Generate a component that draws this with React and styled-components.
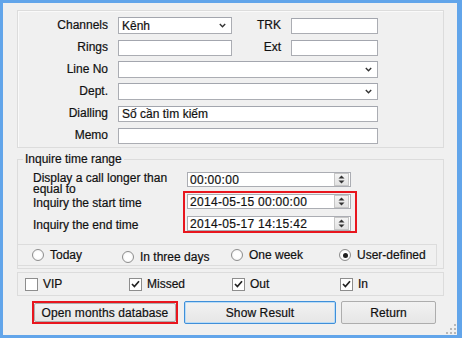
import React from 'react'
import styled, { createGlobalStyle } from 'styled-components'

const GlobalStyle = createGlobalStyle`
  html, body {
    margin: 0;
    padding: 0;
    background: #fff;
  }
  body {
    font-family: "Liberation Sans", Arial, sans-serif;
    font-size: 12px;
    color: #111;
    -webkit-text-stroke: 0.2px #111;
  }
  * {
    box-sizing: border-box;
  }
`

const Window = styled.div`
  position: relative;
  width: 462px;
  height: 338px;
  border-style: solid;
  border-color: #62a5ea;
  border-width: 3px 5px 3px 3px;
  background: #f0f0f0;
  padding: 7px 0 0 14px;
  display: flex;
  flex-direction: column;
`

const Group = styled.div`
  width: 427px;
  border: 1px solid #dcdcdc;
  box-shadow: inset 1px 1px 0 #fafafa;
  padding: ${(p) => p.$pad || '0'};
  margin-top: ${(p) => p.$top || 0}px;
`

const FieldGrid = styled.div`
  display: grid;
  grid-template-columns: 90px 114px 39px 87px;
  grid-auto-rows: 17px;
  column-gap: 10px;
  row-gap: 5px;
  align-items: center;
`

const Label = styled.span`
  text-align: right;
  white-space: nowrap;
  line-height: 14px;
  margin-top: -2px;
`

const Box = styled.div`
  display: flex;
  align-items: center;
  height: ${(p) => p.$h || 16}px;
  background: #fff;
  border: 1px solid #abadb3;
  border-top-color: #a3a6ae;
  padding-left: 3px;
  grid-column: ${(p) => (p.$wide ? '2 / span 3' : 'auto')};
  white-space: nowrap;
  overflow: hidden;
`

const BoxText = styled.span`
  flex: 1;
`

const Chevron = styled.svg`
  width: 7px;
  height: 5px;
  margin-right: 5px;
`

const Select = ({ value, wide }) => (
  <Box $h={17} $wide={wide}>
    <BoxText>{value}</BoxText>
    <Chevron viewBox="0 0 7 5">
      <path d="M0.8 1 L3.5 3.7 L6.2 1" fill="none" stroke="#333" strokeWidth="1.4" />
    </Chevron>
  </Box>
)

const TimeSet = styled.fieldset`
  width: 427px;
  margin: 4px 0 0;
  padding: 6px 0 2px;
  border: 1px solid #dcdcdc;
  min-inline-size: auto;
`

const Legend = styled.legend`
  margin-left: 5px;
  padding: 0 2px;
  line-height: 14px;
`

const TimeRow = styled.div`
  display: flex;
  align-items: flex-start;
  padding-left: 15px;
  margin-top: ${(p) => p.$top || 0}px;
`

const TimeLabel = styled.div`
  width: ${(p) => p.$w}px;
  height: 15px;
  line-height: 10.5px;
  padding-top: 1px;
  overflow: visible;
`

const LabelStack = styled.div`
  width: 150px;
  padding-top: 6px;
  display: flex;
  flex-direction: column;
  gap: 10px;
  line-height: 12px;
`

const RedFrame = styled.div`
  border: 2px solid #e8161e;
  padding: ${(p) => p.$pad || '0'};
  display: flex;
  flex-direction: column;
  gap: 7px;
`

const TimeBox = styled.div`
  display: flex;
  align-items: center;
  width: 164px;
  height: 15px;
  background: #fff;
  border: 1px solid #abadb3;
  padding-left: 2px;
  letter-spacing: 0.3px;
`

const Spinner = styled.div`
  width: 15px;
  height: 13px;
  margin-right: 1px;
  border: 1px solid #c6c6c6;
  background: linear-gradient(#f4f4f4, #e2e2e2);
  display: flex;
  align-items: center;
  justify-content: center;
`

const TimeInput = ({ value }) => (
  <TimeBox>
    <BoxText>{value}</BoxText>
    <Spinner>
      <svg width="9" height="11" viewBox="0 0 9 11">
        <path d="M1.5 4.5 L4.5 1.5 L7.5 4.5 Z" fill="#333" />
        <path d="M1.5 6.5 L4.5 9.5 L7.5 6.5 Z" fill="#333" />
      </svg>
    </Spinner>
  </TimeBox>
)

const OptionBar = styled.div`
  display: flex;
  align-items: center;
  width: ${(p) => p.$w}px;
  height: ${(p) => p.$h}px;
  margin: ${(p) => p.$m || '0'};
  border: 1px solid #dcdcdc;
  padding-left: ${(p) => p.$pl}px;
`

const Option = styled.label`
  display: flex;
  align-items: center;
  width: ${(p) => p.$w || 'auto'};
  gap: ${(p) => p.$gap}px;
  margin-top: ${(p) => p.$dy || 0}px;
`

const Radio = styled.span`
  width: 12px;
  height: 12px;
  border-radius: 50%;
  border: 1px solid #8d8d8d;
  background: radial-gradient(circle, #fff 40%, #ececec);
  display: flex;
  align-items: center;
  justify-content: center;

  &::after {
    content: '';
    width: 5px;
    height: 5px;
    border-radius: 50%;
    background: ${(p) => (p.$on ? '#1f1f1f' : 'transparent')};
  }
`

const Check = styled.span`
  width: 13px;
  height: 13px;
  border: 1px solid #8d8d8d;
  background: #fff;
  display: flex;
  align-items: center;
  justify-content: center;
`

const CheckBox = ({ on }) => (
  <Check>
    {on && (
      <svg width="9" height="8" viewBox="0 0 9 8">
        <path d="M1 4 L3.4 6.5 L8 1.2" fill="none" stroke="#222" strokeWidth="1.7" />
      </svg>
    )}
  </Check>
)

const ButtonRow = styled.div`
  display: flex;
  align-items: flex-start;
  margin-top: 5px;
  padding-left: 15px;
`

const Button = styled.div`
  display: flex;
  align-items: center;
  justify-content: center;
  width: ${(p) => p.$w}px;
  height: ${(p) => p.$h || 23}px;
  margin-left: ${(p) => p.$ml || 0}px;
  border: 1px solid ${(p) => (p.$focus ? '#3f8fd9' : '#adadad')};
  box-shadow: ${(p) => (p.$focus ? 'inset 0 0 0 1px #b9dcf7' : 'none')};
  background: linear-gradient(#f2f2f2, #e6e6e6);
  border-radius: 2px;
  letter-spacing: 0.1px;
`

const Grip = styled.svg`
  position: absolute;
  right: 1px;
  bottom: 1px;
`

const radios = [
  { label: 'Today', w: '90px', dy: 0 },
  { label: 'In three days', w: '109px', dy: 3 },
  { label: 'One week', w: '108px', dy: 0 },
  { label: 'User-defined', on: true, dy: 0 },
]

const checks = [
  { label: 'VIP', w: '104px' },
  { label: 'Missed', on: true, w: '103px' },
  { label: 'Out', on: true, w: '108px' },
  { label: 'In', on: true },
]

export default function App() {
  return (
    <>
      <GlobalStyle />
      <Window>
        <Group $pad="6px 0 3px 0">
          <FieldGrid>
            <Label>Channels</Label>
            <Select value="Kênh" />
            <Label>TRK</Label>
            <Box />

            <Label>Rings</Label>
            <Box />
            <Label>Ext</Label>
            <Box />

            <Label>Line No</Label>
            <Select wide />

            <Label>Dept.</Label>
            <Select wide />

            <Label>Dialling</Label>
            <Box $wide>Số cần tìm kiếm</Box>

            <Label>Memo</Label>
            <Box $wide />
          </FieldGrid>
        </Group>

        <TimeSet>
          <Legend>Inquire time range</Legend>
          <TimeRow>
            <TimeLabel $w={154}>Display a call longer than equal to</TimeLabel>
            <TimeInput value="00:00:00" />
          </TimeRow>
          <TimeRow $top={4}>
            <LabelStack>
              <span>Inquiry the start time</span>
              <span>Inquiry the end time</span>
            </LabelStack>
            <RedFrame $pad="1px 4px 0 2px">
              <TimeInput value="2014-05-15 00:00:00" />
              <TimeInput value="2014-05-17 14:15:42" />
            </RedFrame>
          </TimeRow>
          <OptionBar $w={420} $h={22} $m="11px 0 0 -1px" $pl={14}>
            {radios.map((r) => (
              <Option key={r.label} $w={r.w} $gap={6} $dy={r.dy}>
                <Radio $on={r.on} />
                {r.label}
              </Option>
            ))}
          </OptionBar>
        </TimeSet>

        <OptionBar $w={427} $h={24} $m="3px 0 0" $pl={7}>
          {checks.map((c) => (
            <Option key={c.label} $w={c.w} $gap={5}>
              <CheckBox on={c.on} />
              {c.label}
            </Option>
          ))}
        </OptionBar>

        <ButtonRow>
          <RedFrame>
            <Button $w={142} $h={19}>Open months database</Button>
          </RedFrame>
          <Button $w={152} $ml={6} $focus>Show Result</Button>
          <Button $w={95} $ml={5}>Return</Button>
        </ButtonRow>

        <Grip width="10" height="10" viewBox="0 0 10 10">
          <g fill="#b8b8b8">
            <rect x="8" y="0" width="2" height="2" />
            <rect x="4" y="4" width="2" height="2" />
            <rect x="8" y="4" width="2" height="2" />
            <rect x="0" y="8" width="2" height="2" />
            <rect x="4" y="8" width="2" height="2" />
            <rect x="8" y="8" width="2" height="2" />
          </g>
        </Grip>
      </Window>
    </>
  )
}
